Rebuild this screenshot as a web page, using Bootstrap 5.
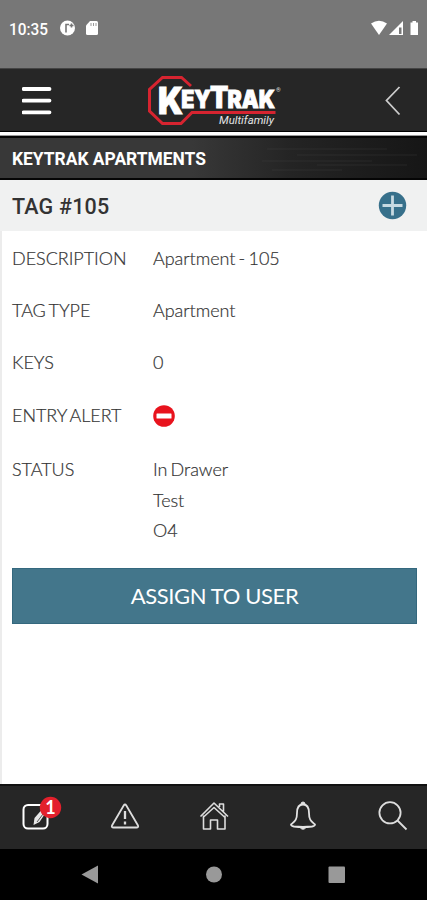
<!DOCTYPE html>
<html lang="en">
<head>
<meta charset="utf-8">
<meta name="viewport" content="width=device-width, initial-scale=1">
<title>KeyTrak Multifamily</title>
<link href="https://cdn.jsdelivr.net/npm/bootstrap@5.3.0/dist/css/bootstrap.min.css" rel="stylesheet">
<style>
body{width:427px;height:900px;overflow:hidden;font-family:Lato,sans-serif;font-size:18px;color:#333;background:#fff}
svg{display:block;flex:none}
.status{height:68px;background:#777;padding:0 5px 13px 9px;color:#fff;font:500 16.5px/1 Roboto,sans-serif}
.topbar{height:64px;background:#262626;border-top:1px solid #444;border-bottom:1px solid #000;padding:2px 26px 0 22px}
.brand{margin-right:9px}
.rule{height:4px;background:#fff;border-bottom:1px solid #999}
.site{height:44px;padding-left:12px;border-top:2px solid #050505;border-bottom:2px solid #050505;background:linear-gradient(90deg,#383838 0,#383838 45%,#242424 68%,#161616 100%);color:#fff;font:700 17.5px/1 Roboto,sans-serif;position:relative}
.streaks{position:absolute;right:0;top:0}
.titlebar{height:51px;background:#f0f1f1;padding:0 20px 0 12px;color:#333}
.titlebar h1{font:500 21.5px/1 Roboto,sans-serif;letter-spacing:.2px;padding-top:2px}
.shell{border-left:2px solid #ececec;height:553px;padding:0 10px}
.line-item{line-height:30px;font-weight:300;word-spacing:-1.6px;letter-spacing:-.04px;-webkit-text-stroke:.2px #333}
.label-col{width:141px;flex:none}
.r1{padding-top:12px;height:64px}.r2{height:52px}.r3{height:53px}.r4{height:54px}.r5{height:114px;line-height:30.7px}
.assign{height:56px;border-radius:0;background:#43768b;border:1px solid #34687e;color:#fff;font-size:22px;line-height:1;letter-spacing:-.38px}
.tabs{height:65px;background:#262626;border-top:2px solid #111;padding:0 19px 3px 22px}
.tabs svg{overflow:visible}
.sysnav{height:51px;background:#000}
</style>
</head>
<body class="d-flex flex-column">
<div class="status d-flex align-items-end flex-shrink-0">
  <svg width="413" height="54" viewBox="0 0 413 54" fill="#fff">
    <text x="0" y="33.500" font-size="16.500" textLength="39" lengthAdjust="spacingAndGlyphs">10:35</text>
    <circle cx="58.500" cy="27" r="7.500"/><path d="M57 31.500v-8h3M62.500 22.500v4M60.500 24.500h4" stroke="#777" stroke-width="1.600" fill="none"/>
    <path d="M81 20h6.500q1.500 0 1.500 1.500v11q0 1.500-1.500 1.500h-9q-1.500 0-1.500-1.500V24.500z"/><path d="M82 22v3M84.500 22v3M87 22v3" stroke="#999"/>
    <path d="M362 22.500q8-5.500 16 0L370 34z"/>
    <path d="M380 34L394 20v14z"/><path d="M390 26.500h2.500V33H390z" fill="#777"/>
    <path d="M401.500 21.500h2V20h3.500v1.500h2V34h-7.500z"/>
  </svg>
</div>
<header class="topbar d-flex align-items-center justify-content-between flex-shrink-0">
  <svg width="30" height="30" viewBox="0 0 30 30" stroke="#fff" stroke-width="3.800" stroke-linecap="round"><path d="M1.500 3h26M1.500 14.600h26M1.500 26.300h26"/></svg>
  <svg class="brand" width="134" height="52" viewBox="147 75 134 52">
    <path d="M191 86L181.500 77.500H162.500L149.500 89.500V111L162.500 123.500H181L192 112.500H275.500" fill="none" stroke="#d62430" stroke-width="3"/>
    <text x="158" y="114" fill="#fff" stroke="#fff" stroke-width=".9" font-family="Inter,sans-serif" font-weight="900" textLength="117" lengthAdjust="spacingAndGlyphs"><tspan font-size="37">K</tspan><tspan font-size="24" dx="-2" dy="-6.200">EY</tspan><tspan font-size="30" dx="-1">T</tspan><tspan font-size="24" dx="-1">RAK</tspan></text>
    <text x="276" y="92" font-size="6" fill="#ddd" font-family="Roboto,sans-serif">®</text>
    <text x="219" y="124" font-size="11.500" font-style="italic" fill="#e4e4e4" font-family="Roboto,sans-serif" textLength="55" lengthAdjust="spacingAndGlyphs">Multifamily</text>
  </svg>
  <svg width="16" height="30" viewBox="0 0 16 30" fill="none" stroke="#ccc" stroke-width="1.800"><path d="M14.500 1L1.500 14.500L14.500 28.500"/></svg>
</header>
<div class="rule flex-shrink-0"></div>
<div class="site d-flex align-items-center flex-shrink-0">
  <svg class="streaks" width="170" height="40" viewBox="0 0 170 40" fill="none" stroke="#555" stroke-opacity=".25"><path d="M10 11h120M40 17h120M5 23h110M60 27h90M15 32h70"/></svg>
  <svg width="195" height="40" viewBox="0 0 195 40"><text y="27" fill="#fff" textLength="194" lengthAdjust="spacingAndGlyphs">KEYTRAK APARTMENTS</text></svg>
</div>
<div class="titlebar d-flex align-items-center justify-content-between flex-shrink-0">
  <h1 class="m-0">TAG #105</h1>
  <svg width="29" height="29" viewBox="0 0 29 29"><circle cx="14.500" cy="14.500" r="13.700" fill="#37708b"/><path d="M14.500 4.500v20M4.500 14.500h20" stroke="#c7dae2" stroke-width="2.800"/></svg>
</div>
<main class="shell flex-shrink-0">
  <div class="line-item r1 d-flex"><div class="label-col">DESCRIPTION</div><div>Apartment - 105</div></div>
  <div class="line-item r2 d-flex"><div class="label-col">TAG TYPE</div><div>Apartment</div></div>
  <div class="line-item r3 d-flex"><div class="label-col">KEYS</div><div>0</div></div>
  <div class="line-item r4 d-flex"><div class="label-col">ENTRY ALERT</div>
    <svg class="mt-1" width="22" height="24" viewBox="0 0 22 24"><circle cx="11" cy="12" r="10.800" fill="#e8131d"/><rect x="3.500" y="9.500" width="15" height="5" rx=".5" fill="#fff"/></svg></div>
  <div class="line-item r5 d-flex"><div class="label-col">STATUS</div><div>In Drawer<br>Test<br>O4</div></div>
  <button class="assign btn w-100 p-0">ASSIGN TO USER</button>
</main>
<nav class="tabs d-flex align-items-center justify-content-between flex-shrink-0">
  <svg width="30" height="30" viewBox="22 801 30 30">
    <rect x="23.500" y="805" width="24" height="23.500" rx="4.500" fill="none" stroke="#fff" stroke-width="2"/>
    <path d="M33.500 825l1-7 7-8 4 3-6 9z" fill="#e8e8e8"/><path d="M37 822l6-8" stroke="#555"/>
    <circle cx="50.500" cy="807.500" r="10.700" fill="#e3202c"/><text x="50.500" y="814" font-size="18" font-weight="700" fill="#fff" text-anchor="middle">1</text></svg>
  <svg width="30" height="30" viewBox="111 801 30 30" fill="none" stroke="#ddd" stroke-width="1.800" stroke-linejoin="round"><path d="M123.700 805.500q1.300-2 2.600 0L138 825.500q.8 2-1.500 2H113.500q-2.300 0-1.500-2z"/><path d="M125 811v8M125 821.500v3" stroke-width="2.300"/></svg>
  <svg width="30" height="30" viewBox="200 801 30 30" fill="none" stroke="#ddd" stroke-width="1.600" stroke-linejoin="round"><path d="M200.500 816.500L214 803l14 13.500M203.500 815.500V829H210.500V820H217.500V829H225V815.500M219.500 807v-3h4v7.500M203 817.500l11-10 11 10"/></svg>
  <svg width="30" height="30" viewBox="289 801 30 30" fill="none" stroke="#e2e2e2" stroke-width="1.800" stroke-linejoin="round"><path d="M303 804.500C298 804.500 297 808 297 813C297 820 295 821 291 824.500Q291 826 294 826.500Q303 827.500 312 826.500Q315 826 315 824.500C311 821 309 820 309 813C309 808 308 804.500 303 804.500z"/><path d="M301 804q0-2 2-2t2 2zM300 827.500h6q-3 3.500-6 0z" fill="#e2e2e2" stroke-width="1"/></svg>
  <svg width="30" height="30" viewBox="378 801 30 30" fill="none" stroke="#ddd" stroke-width="1.800"><circle cx="390" cy="812.800" r="10.600"/><path d="M397.500 820.500l9 9"/></svg>
</nav>
<div class="sysnav flex-shrink-0">
  <svg width="427" height="51" viewBox="0 849 427 51" fill="#999"><path d="M81.500 874.500L98 865.500v18z"/><circle cx="214" cy="874.500" r="8"/><rect x="328.500" y="866.500" width="16.500" height="16.500" rx="1"/></svg>
</div>
<script src="https://cdn.jsdelivr.net/npm/bootstrap@5.3.0/dist/js/bootstrap.bundle.min.js"></script>
</body>
</html>
